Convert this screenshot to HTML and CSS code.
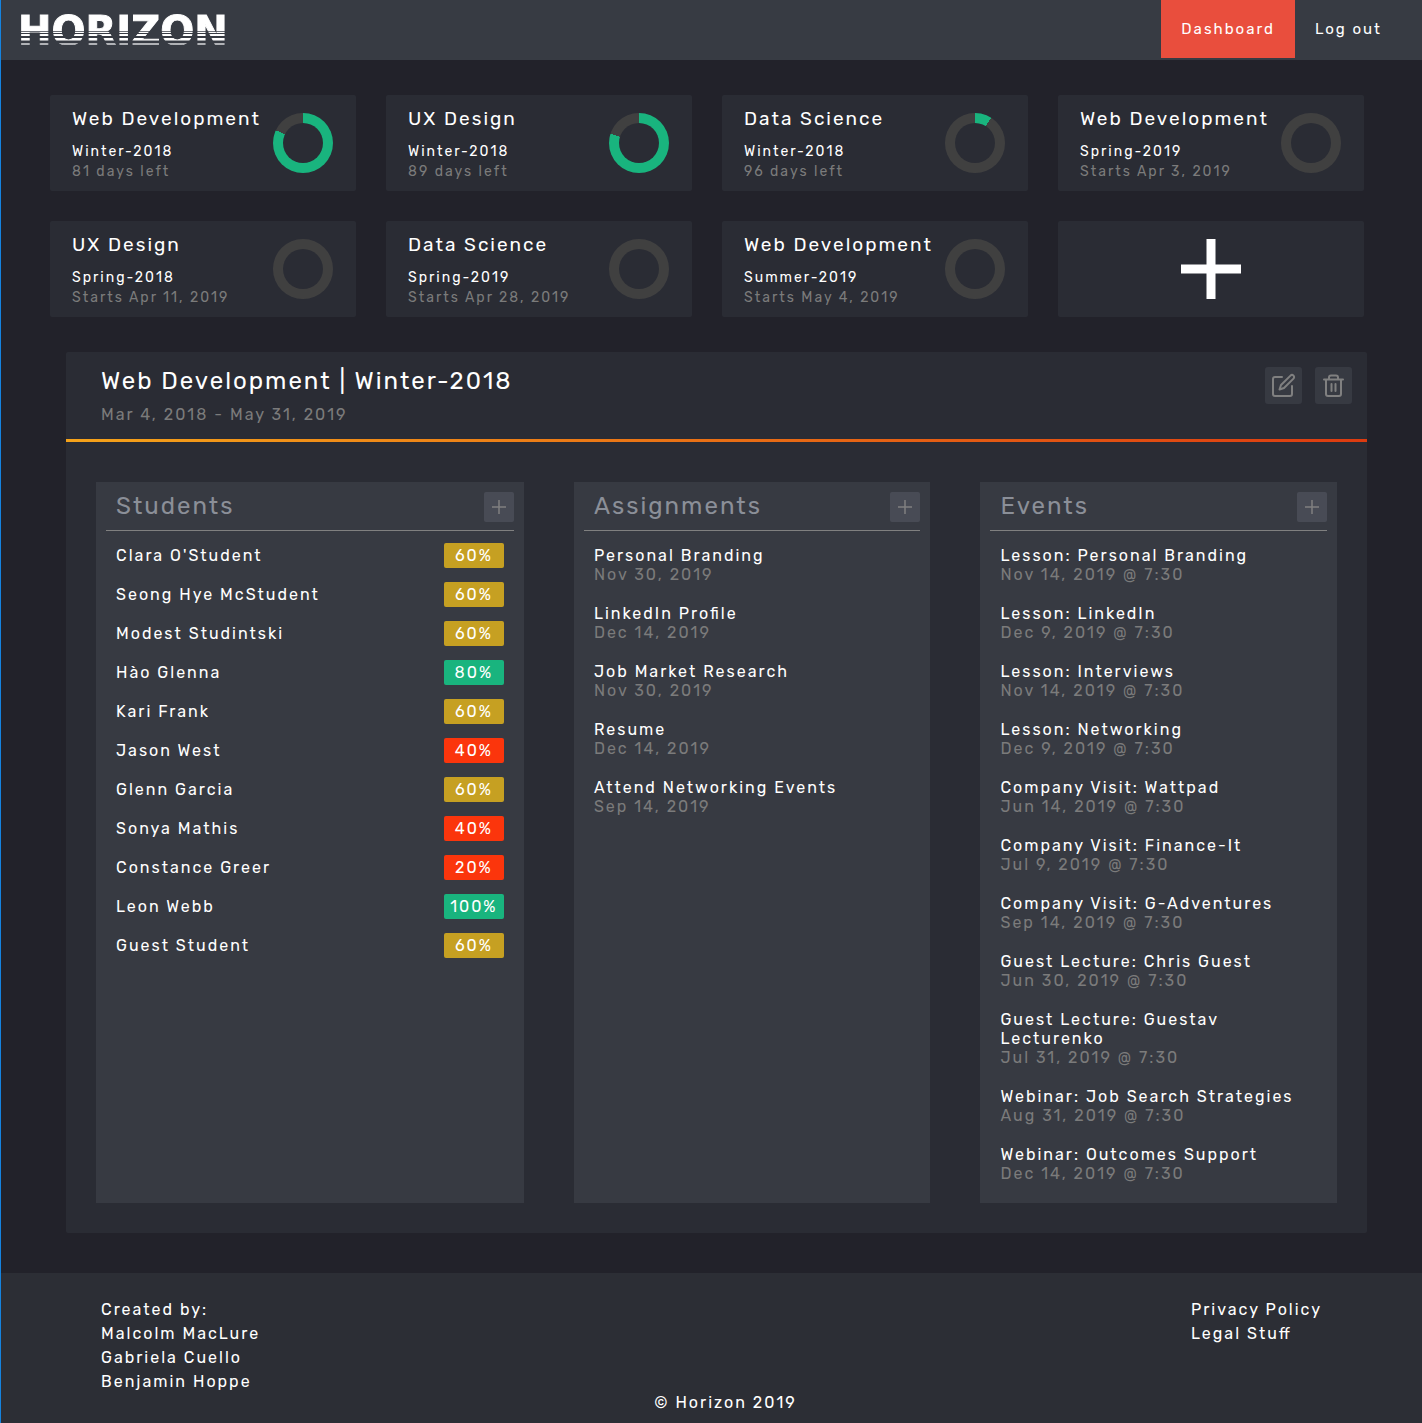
FILE: index.html
```html
<!DOCTYPE html>
<html lang="en">
<head>
<meta charset="utf-8">
<title>Horizon – Dashboard</title>
<link rel="stylesheet" href="styles.css">
</head>
<body>
<header class="topbar">
  <a class="logo" href="#">HORIZON</a>
  <nav class="menu">
    <a class="menu-link active" href="#">Dashboard</a>
    <a class="menu-link" href="#">Log out</a>
  </nav>
</header>

<main>
  <section class="cohorts">
    <a class="card" href="#"><span class="card-text"><span class="card-title">Web Development</span><span class="card-term">Winter-2018</span><span class="card-days">81 days left</span></span><span class="ring" style="--done: 82%"></span></a>
    <a class="card" href="#"><span class="card-text"><span class="card-title">UX Design</span><span class="card-term">Winter-2018</span><span class="card-days">89 days left</span></span><span class="ring" style="--done: 80%"></span></a>
    <a class="card" href="#"><span class="card-text"><span class="card-title">Data Science</span><span class="card-term">Winter-2018</span><span class="card-days">96 days left</span></span><span class="ring" style="--done: 9%"></span></a>
    <a class="card" href="#"><span class="card-text"><span class="card-title">Web Development</span><span class="card-term">Spring-2019</span><span class="card-days">Starts Apr 3, 2019</span></span><span class="ring" style="--done: 0%"></span></a>
    <a class="card" href="#"><span class="card-text"><span class="card-title">UX Design</span><span class="card-term">Spring-2018</span><span class="card-days">Starts Apr 11, 2019</span></span><span class="ring" style="--done: 0%"></span></a>
    <a class="card" href="#"><span class="card-text"><span class="card-title">Data Science</span><span class="card-term">Spring-2019</span><span class="card-days">Starts Apr 28, 2019</span></span><span class="ring" style="--done: 0%"></span></a>
    <a class="card" href="#"><span class="card-text"><span class="card-title">Web Development</span><span class="card-term">Summer-2019</span><span class="card-days">Starts May 4, 2019</span></span><span class="ring" style="--done: 0%"></span></a>
    <button class="card card-add" type="button" aria-label="Add cohort">
      <svg width="60" height="60" viewBox="0 0 60 60"><path d="M30 0v60M0 30h60" stroke="#fff" stroke-width="9"/></svg>
    </button>
  </section>

  <section class="panel">
    <header class="panel-head">
      <div>
        <h1>Web Development | Winter-2018</h1>
        <p class="dates">Mar 4, 2018 - May 31, 2019</p>
      </div>
      <div class="actions">
        <button class="tool" type="button" aria-label="Edit cohort">
          <svg width="25" height="25" viewBox="0 0 25 25" fill="none" stroke="currentColor" stroke-width="2" stroke-linecap="round" stroke-linejoin="round"><path d="M11 4H4a2 2 0 0 0-2 2v15a2 2 0 0 0 2 2h15a2 2 0 0 0 2-2v-8"/><path d="M19.500 2.600a2.100 2.100 0 0 1 3 3L13 15l-4.500 1.500L10 12z"/></svg>
        </button>
        <button class="tool" type="button" aria-label="Delete cohort">
          <svg width="25" height="25" viewBox="0 0 25 25" fill="none" stroke="currentColor" stroke-width="2" stroke-linecap="round" stroke-linejoin="round"><path d="M3 6.500h19M5 7v14a2 2 0 0 0 2 2h11a2 2 0 0 0 2-2V7M8 6V4.500a2 2 0 0 1 2-2h5a2 2 0 0 1 2 2V6M10.500 11v7M14.500 11v7"/></svg>
        </button>
      </div>
    </header>

    <div class="columns">
      <section class="column">
        <header class="column-head"><h2>Students</h2><button class="add" type="button" aria-label="Add student"><svg width="14" height="14" viewBox="0 0 14 14"><path d="M7 0v14M0 7h14" stroke="currentColor" stroke-width="1.500"/></svg></button></header>
        <ul class="students">
          <li>Clara O'Student<span class="score mid">60%</span></li>
          <li>Seong Hye McStudent<span class="score mid">60%</span></li>
          <li>Modest Studintski<span class="score mid">60%</span></li>
          <li>Hào Glenna<span class="score high">80%</span></li>
          <li>Kari Frank<span class="score mid">60%</span></li>
          <li>Jason West<span class="score low">40%</span></li>
          <li>Glenn Garcia<span class="score mid">60%</span></li>
          <li>Sonya Mathis<span class="score low">40%</span></li>
          <li>Constance Greer<span class="score low">20%</span></li>
          <li>Leon Webb<span class="score high">100%</span></li>
          <li>Guest Student<span class="score mid">60%</span></li>
        </ul>
      </section>

      <section class="column">
        <header class="column-head"><h2>Assignments</h2><button class="add" type="button" aria-label="Add assignment"><svg width="14" height="14" viewBox="0 0 14 14"><path d="M7 0v14M0 7h14" stroke="currentColor" stroke-width="1.500"/></svg></button></header>
        <ul class="entries">
          <li>Personal Branding<time>Nov 30, 2019</time></li>
          <li>LinkedIn Profile<time>Dec 14, 2019</time></li>
          <li>Job Market Research<time>Nov 30, 2019</time></li>
          <li>Resume<time>Dec 14, 2019</time></li>
          <li>Attend Networking Events<time>Sep 14, 2019</time></li>
        </ul>
      </section>

      <section class="column">
        <header class="column-head"><h2>Events</h2><button class="add" type="button" aria-label="Add event"><svg width="14" height="14" viewBox="0 0 14 14"><path d="M7 0v14M0 7h14" stroke="currentColor" stroke-width="1.500"/></svg></button></header>
        <ul class="entries">
          <li>Lesson: Personal Branding<time>Nov 14, 2019 @ 7:30</time></li>
          <li>Lesson: LinkedIn<time>Dec 9, 2019 @ 7:30</time></li>
          <li>Lesson: Interviews<time>Nov 14, 2019 @ 7:30</time></li>
          <li>Lesson: Networking<time>Dec 9, 2019 @ 7:30</time></li>
          <li>Company Visit: Wattpad<time>Jun 14, 2019 @ 7:30</time></li>
          <li>Company Visit: Finance-It<time>Jul 9, 2019 @ 7:30</time></li>
          <li>Company Visit: G-Adventures<time>Sep 14, 2019 @ 7:30</time></li>
          <li>Guest Lecture: Chris Guest<time>Jun 30, 2019 @ 7:30</time></li>
          <li>Guest Lecture: Guestav Lecturenko<time>Jul 31, 2019 @ 7:30</time></li>
          <li>Webinar: Job Search Strategies<time>Aug 31, 2019 @ 7:30</time></li>
          <li>Webinar: Outcomes Support<time>Dec 14, 2019 @ 7:30</time></li>
        </ul>
      </section>
    </div>
  </section>
</main>

<footer class="footer">
  <div>Created by:<br>Malcolm MacLure<br>Gabriela Cuello<br>Benjamin Hoppe</div>
  <div class="copyright">© Horizon 2019</div>
  <div class="legal"><a href="#">Privacy Policy</a><a href="#">Legal Stuff</a></div>
</footer>
</body>
</html>
```
FILE: styles.css
```css
* { box-sizing: border-box; margin: 0; padding: 0; }

body {
  background: #22222a;
  border-left: 1px solid #1583df;
  color: #fff;
  font: 16px/19px Rubik, Roboto, sans-serif;
  font-feature-settings: "liga" 1;
  letter-spacing: 2px;
}
a { color: inherit; text-decoration: none; }
button { border: 0; font: inherit; cursor: pointer; }
ul { list-style: none; }
svg { display: block; }

.topbar {
  display: flex;
  justify-content: space-between;
  height: 60px;
  padding: 0 20px 0 17px;
  background: #373b43;
}
.logo {
  font: bold 40px/62px "DejaVu Sans", sans-serif;
  letter-spacing: 0;
  color: transparent;
  -webkit-text-stroke: 1px transparent;
  background: linear-gradient(#fff 31px, #6c6f76 31px 32px, #fff 32px 33px, #373b43 33px 34px, #fff 34px 36px, #373b43 36px 38px, #fff 38px 40px, #a0a2a6 40px 41px, #373b43 41px 43px, #b0b2b6 43px 45px, #373b43 45px);
  -webkit-background-clip: text;
  background-clip: text;
}
.menu { display: flex; align-items: flex-start; }
.menu-link { padding: 0 20px; font-size: 15px; line-height: 58px; }
.menu-link.active { background: #e94e3d; }

.cohorts {
  display: grid;
  grid-template-columns: repeat(4, 1fr);
  gap: 30px;
  padding: 35px 58px 35px 49px;
}
.card {
  display: flex;
  align-items: center;
  justify-content: space-between;
  height: 96px;
  padding: 0 23px 0 22px;
  background: #2a2c34;
  border-radius: 2px;
}
.card-add { justify-content: center; }
.card-text { display: flex; flex-direction: column; padding-top: 3px; white-space: nowrap; }
.card-title { font-size: 19px; line-height: 24px; margin-bottom: 11px; }
.card-term, .card-days { font-size: 14px; line-height: 20px; }
.card-days { color: #7b7b7b; }
.ring {
  flex: none;
  width: 60px;
  height: 60px;
  padding: 10px;
  border-radius: 50%;
  background: conic-gradient(#19b47e var(--done), #404040 0);
}
.ring::after {
  content: "";
  display: block;
  height: 40px;
  border-radius: 50%;
  background: #2a2c34;
}

.panel { margin: 0 55px 40px 65px; background: #2a2c34; border-radius: 2px; }
.panel-head {
  display: flex;
  justify-content: space-between;
  height: 90px;
  padding: 15px 15px 0 35px;
  border-bottom: 3px solid;
  border-image: linear-gradient(90deg, #f5a31a, #dc3b10) 1;
}
h1 { font-size: 24px; line-height: 28px; font-weight: 400; }
.dates { margin-top: 10px; color: #7b7b7b; }
.actions { display: flex; gap: 13px; }
.tool {
  display: grid;
  place-items: center;
  width: 37px;
  height: 37px;
  color: #808080;
  background: #373a42;
  border-radius: 3px;
}

.columns {
  display: grid;
  grid-template-columns: 6fr 5fr 5fr;
  gap: 50px;
  padding: 40px 30px 30px;
}
.column { padding: 0 10px; background: #373a42; }
.column-head {
  display: flex;
  justify-content: space-between;
  height: 49px;
  padding: 10px 0 0 10px;
  border-bottom: 1px solid #808080;
}
h2 { font-size: 24px; line-height: 28px; font-weight: 400; color: #8b8f98; }
.add {
  display: grid;
  place-items: center;
  width: 30px;
  height: 30px;
  color: #808080;
  background: #484b55;
  border-radius: 2px;
}
.students { padding: 12px 10px; }
.students li {
  display: flex;
  align-items: center;
  justify-content: space-between;
  margin-bottom: 14px;
}
.score {
  width: 60px;
  line-height: 25px;
  text-align: center;
  border-radius: 2px;
}
.mid { background: #c6a022; }
.high { background: #19b47e; }
.low { background: #fb350c; }
.entries { padding: 15px 10px 0; }
.entries li { margin-bottom: 20px; }
.entries time { display: block; color: #7b7b7b; }

.footer {
  display: flex;
  justify-content: space-between;
  min-height: 150px;
  padding: 25px 100px 8px;
  line-height: 24px;
  background: #2c2e35;
}
.copyright { align-self: flex-end; }
.legal { display: flex; flex-direction: column; }
```
